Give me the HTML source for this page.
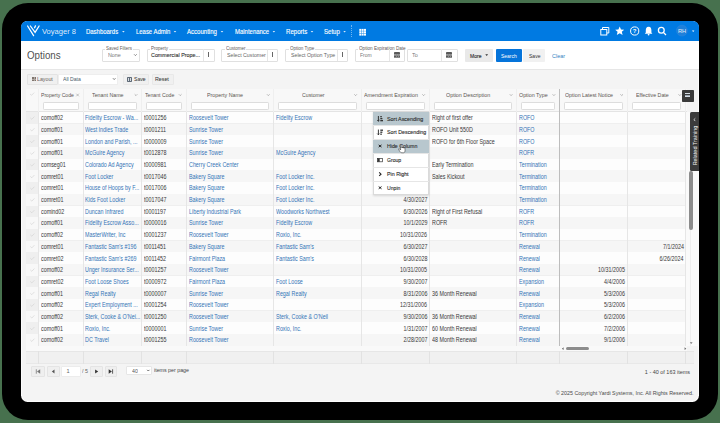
<!DOCTYPE html>
<html><head><meta charset="utf-8"><style>
html,body{margin:0;padding:0;}
body{width:720px;height:423px;position:relative;overflow:hidden;background:#47714e;font-family:"Liberation Sans", sans-serif;}
.a{position:absolute;}
.t{white-space:nowrap;}
</style></head><body>
<div class="a" style="left:2.1px;top:2.5px;width:715.6px;height:417.1px;background:#000;border-radius:26px;"></div>
<div class="a" style="left:20.9px;top:20.8px;width:677.8px;height:380.8px;background:#fcfcfc;border-radius:6.5px;"></div>
<div class="a" style="left:21.7px;top:21px;width:676.4px;height:379.9px;background:#f4f4f4;border-radius:6px;"></div>
<div class="a" style="left:21px;top:21px;width:677.7px;height:20.45px;background:#007ae2;border-radius:6px 6px 0 0;"></div>
<svg class="a" style="left:0;top:0" width="720" height="60"><g stroke="#fff" stroke-width="1.25" fill="none" stroke-linecap="round"><path d="M27.6 26 L33.6 35.6"/><path d="M30.4 26 L35.1 32.4 L39.1 26"/><path d="M35.5 25.8 L34.6 27.8"/></g></svg>
<div class="a t" style="top:26.82px;font-size:7.9px;line-height:9.48px;color:rgba(255,255,255,0.88);left:42px;transform:scaleX(0.956);transform-origin:0 0;">Voyager 8</div>
<div class="a t" style="top:28.34px;font-size:6.4px;line-height:7.68px;color:#fff;left:85.7px;transform:scaleX(0.933);transform-origin:0 0;-webkit-text-stroke:0.12px #fff;">Dashboards</div>
<svg class="a" style="left:0;top:0" width="720" height="50"><path d="M122.10000000000001 31.1 L124.7 31.1 L123.4 32.6 Z" fill="rgba(255,255,255,0.85)"/></svg>
<div class="a t" style="top:28.34px;font-size:6.4px;line-height:7.68px;color:#fff;left:135.7px;transform:scaleX(0.927);transform-origin:0 0;-webkit-text-stroke:0.12px #fff;">Lease Admin</div>
<svg class="a" style="left:0;top:0" width="720" height="50"><path d="M173.7 31.1 L176.3 31.1 L175 32.6 Z" fill="rgba(255,255,255,0.85)"/></svg>
<div class="a t" style="top:28.34px;font-size:6.4px;line-height:7.68px;color:#fff;left:187px;transform:scaleX(0.947);transform-origin:0 0;-webkit-text-stroke:0.12px #fff;">Accounting</div>
<svg class="a" style="left:0;top:0" width="720" height="50"><path d="M220.7 31.1 L223.3 31.1 L222 32.6 Z" fill="rgba(255,255,255,0.85)"/></svg>
<div class="a t" style="top:28.34px;font-size:6.4px;line-height:7.68px;color:#fff;left:234.6px;transform:scaleX(0.933);transform-origin:0 0;-webkit-text-stroke:0.12px #fff;">Maintenance</div>
<svg class="a" style="left:0;top:0" width="720" height="50"><path d="M272.59999999999997 31.1 L275.2 31.1 L273.9 32.6 Z" fill="rgba(255,255,255,0.85)"/></svg>
<div class="a t" style="top:28.34px;font-size:6.4px;line-height:7.68px;color:#fff;left:285.7px;transform:scaleX(0.950);transform-origin:0 0;-webkit-text-stroke:0.12px #fff;">Reports</div>
<svg class="a" style="left:0;top:0" width="720" height="50"><path d="M310.7 31.1 L313.3 31.1 L312 32.6 Z" fill="rgba(255,255,255,0.85)"/></svg>
<div class="a t" style="top:28.34px;font-size:6.4px;line-height:7.68px;color:#fff;left:324px;transform:scaleX(0.951);transform-origin:0 0;-webkit-text-stroke:0.12px #fff;">Setup</div>
<svg class="a" style="left:0;top:0" width="720" height="50"><path d="M343.3 31.1 L345.90000000000003 31.1 L344.6 32.6 Z" fill="rgba(255,255,255,0.85)"/></svg>
<div class="a" style="left:351px;top:25px;width:0.7px;height:12px;border-left:0.7px dotted rgba(255,255,255,0.45);"></div>
<svg class="a" style="left:0;top:0" width="720" height="60"><rect x="359.3" y="28.9" width="2.0" height="2.0" fill="#fff"/><rect x="359.3" y="31.25" width="2.0" height="2.0" fill="#fff"/><rect x="359.3" y="33.6" width="2.0" height="2.0" fill="#fff"/><rect x="361.65000000000003" y="28.9" width="2.0" height="2.0" fill="#fff"/><rect x="361.65000000000003" y="31.25" width="2.0" height="2.0" fill="#fff"/><rect x="361.65000000000003" y="33.6" width="2.0" height="2.0" fill="#fff"/><rect x="364.0" y="28.9" width="2.0" height="2.0" fill="#fff"/><rect x="364.0" y="31.25" width="2.0" height="2.0" fill="#fff"/><rect x="364.0" y="33.6" width="2.0" height="2.0" fill="#fff"/></svg>
<svg class="a" style="left:0;top:0" width="720" height="60"><g fill="none" stroke="#fff" stroke-width="1"><rect x="600.8" y="29.5" width="6" height="5.5"/><path d="M602.5 29.5 V27.5 H608.8 V33 H606.8"/><circle cx="634.7" cy="31" r="4.1"/></g><path fill="#fff" d="M619.7 26.6 L621 29.5 L624.2 29.7 L621.8 31.8 L622.6 35 L619.7 33.3 L616.8 35 L617.6 31.8 L615.2 29.7 L618.4 29.5 Z"/><text x="634.7" y="33.3" font-size="6" font-weight="700" fill="#fff" text-anchor="middle" font-family="Liberation Sans">?</text><path fill="#fff" d="M648.6 26.8 C646.2 26.8 645.8 29 645.8 30.5 V32.6 L644.8 33.8 H652.4 L651.4 32.6 V30.5 C651.4 29 651 26.8 648.6 26.8 Z"/><circle cx="648.6" cy="34.6" r="0.9" fill="#fff"/><g fill="none" stroke="#fff" stroke-width="1.3"><circle cx="661.3" cy="30.3" r="2.9"/><path d="M663.4 32.4 L666 35"/></g><circle cx="681.9" cy="30.6" r="5.5" fill="#1f80da" stroke="#2f8ae0" stroke-width="0.4"/><text x="682" y="32.9" font-size="5.6" fill="#e6eef8" text-anchor="middle" font-family="Liberation Sans" textLength="8.2" lengthAdjust="spacingAndGlyphs">RH</text><path d="M692 30.6 L694.4 30.6 L693.2 32.0 Z" fill="#fff"/></svg>
<div class="a" style="left:21px;top:41.45px;width:677.7px;height:27.35px;background:#fff;"></div>
<div class="a" style="left:21px;top:68.6px;width:677.7px;height:0.6px;background:#e6e6e6;"></div>
<div class="a t" style="top:49.38px;font-size:10.8px;line-height:12.96px;color:#505050;left:27.4px;transform:scaleX(0.903);transform-origin:0 0;">Options</div>
<div class="a" style="left:101.7px;top:48.9px;width:38px;height:12.7px;background:#fff;border:0.6px solid #e0e0e0;box-sizing:border-box;border-radius:1px;"></div>
<div class="a" style="left:104.8px;top:46px;width:27.89999999999999px;height:3.5px;background:#fff;"></div>
<div class="a t" style="top:45.17px;font-size:5.0px;line-height:6.00px;color:#5f5a56;left:105.8px;transform:scaleX(0.888);transform-origin:0 0;">Saved Filters</div>
<div class="a t" style="top:51.23px;font-size:6.1px;line-height:7.32px;color:#777;left:107.5px;transform:scaleX(0.878);transform-origin:0 0;">None</div>
<svg class="a" style="left:0;top:0" width="720" height="70"><path d="M134.1 54.3 L135.39999999999998 55.6 L136.7 54.3" stroke="#555" stroke-width="0.7" fill="none"/></svg>
<div class="a" style="left:146.8px;top:48.9px;width:68.2px;height:12.7px;background:#fff;border:0.6px solid #e0e0e0;box-sizing:border-box;border-radius:1px;"></div>
<div class="a" style="left:149.9px;top:46px;width:19.0px;height:3.5px;background:#fff;"></div>
<div class="a t" style="top:45.17px;font-size:5.0px;line-height:6.00px;color:#5f5a56;left:150.9px;transform:scaleX(0.900);transform-origin:0 0;">Property</div>
<div class="a t" style="top:51.23px;font-size:6.1px;line-height:7.32px;color:#333;left:151.3px;transform:scaleX(0.881);transform-origin:0 0;-webkit-text-stroke:0.12px #333;">Commercial Prope...</div>
<div class="a" style="left:203.3px;top:48.9px;width:0.6px;height:12px;background:#e6e6e6;"></div>
<div class="a" style="left:208.15px;top:52.3px;width:0.8px;height:1.25px;background:#666;"></div>
<div class="a" style="left:208.15px;top:54.25px;width:0.8px;height:1.25px;background:#666;"></div>
<div class="a" style="left:208.15px;top:56.199999999999996px;width:0.8px;height:1.25px;background:#666;"></div>
<div class="a" style="left:221.3px;top:48.9px;width:57px;height:12.7px;background:#fff;border:0.6px solid #e0e0e0;box-sizing:border-box;border-radius:1px;"></div>
<div class="a" style="left:224.6px;top:46px;width:21.5px;height:3.5px;background:#fff;"></div>
<div class="a t" style="top:45.17px;font-size:5.0px;line-height:6.00px;color:#5f5a56;left:225.6px;transform:scaleX(0.900);transform-origin:0 0;">Customer</div>
<div class="a t" style="top:51.23px;font-size:6.1px;line-height:7.32px;color:#666;left:226.6px;transform:scaleX(0.863);transform-origin:0 0;">Select Customer</div>
<div class="a" style="left:267.4px;top:48.9px;width:0.6px;height:12px;background:#e6e6e6;"></div>
<div class="a" style="left:272.25px;top:52.3px;width:0.8px;height:1.25px;background:#666;"></div>
<div class="a" style="left:272.25px;top:54.25px;width:0.8px;height:1.25px;background:#666;"></div>
<div class="a" style="left:272.25px;top:56.199999999999996px;width:0.8px;height:1.25px;background:#666;"></div>
<div class="a" style="left:285.3px;top:48.9px;width:63.2px;height:12.7px;background:#fff;border:0.6px solid #e0e0e0;box-sizing:border-box;border-radius:1px;"></div>
<div class="a" style="left:288.6px;top:46px;width:26.299999999999955px;height:3.5px;background:#fff;"></div>
<div class="a t" style="top:45.17px;font-size:5.0px;line-height:6.00px;color:#5f5a56;left:289.6px;transform:scaleX(0.904);transform-origin:0 0;">Option Type</div>
<div class="a t" style="top:51.23px;font-size:6.1px;line-height:7.32px;color:#666;left:290.6px;transform:scaleX(0.861);transform-origin:0 0;">Select Option Type</div>
<div class="a" style="left:336.9px;top:48.9px;width:0.6px;height:12px;background:#e6e6e6;"></div>
<div class="a" style="left:341.75px;top:52.3px;width:0.8px;height:1.25px;background:#666;"></div>
<div class="a" style="left:341.75px;top:54.25px;width:0.8px;height:1.25px;background:#666;"></div>
<div class="a" style="left:341.75px;top:56.199999999999996px;width:0.8px;height:1.25px;background:#666;"></div>
<div class="a" style="left:355.3px;top:48.9px;width:50.0px;height:12.7px;background:#fff;border:0.6px solid #e0e0e0;box-sizing:border-box;border-radius:1px;"></div>
<div class="a" style="left:358px;top:46px;width:48.69999999999999px;height:3.5px;background:#fff;"></div>
<div class="a t" style="top:45.17px;font-size:5.0px;line-height:6.00px;color:#5f5a56;left:359px;transform:scaleX(0.928);transform-origin:0 0;">Option Expiration Date</div>
<div class="a t" style="top:51.23px;font-size:6.1px;line-height:7.32px;color:#777;left:360.2px;transform:scaleX(0.822);transform-origin:0 0;">From</div>
<div class="a" style="left:389.4px;top:48.9px;width:0.6px;height:12px;background:#e6e6e6;"></div>
<div class="a" style="left:394.2px;top:52.0px;width:5.9px;height:6.0px;background:#5a5a5a;border-radius:0.4px;"></div>
<div class="a" style="left:394.2px;top:53.5px;width:5.9px;height:0.4px;background:#9a9a9a;"></div>
<div class="a" style="left:394.2px;top:55.2px;width:5.9px;height:0.4px;background:#8a8a8a;"></div>
<div class="a" style="left:394.2px;top:56.6px;width:5.9px;height:0.4px;background:#8a8a8a;"></div>
<div class="a" style="left:396.09999999999997px;top:53.5px;width:0.4px;height:4.5px;background:#8a8a8a;"></div>
<div class="a" style="left:397.9px;top:53.5px;width:0.4px;height:4.5px;background:#8a8a8a;"></div>
<div class="a" style="left:407.4px;top:48.9px;width:50.3px;height:12.7px;background:#fff;border:0.6px solid #e0e0e0;box-sizing:border-box;border-radius:1px;"></div>
<div class="a t" style="top:51.23px;font-size:6.1px;line-height:7.32px;color:#777;left:412.3px;transform:scaleX(0.900);transform-origin:0 0;">To</div>
<div class="a" style="left:441.25px;top:48.9px;width:0.6px;height:12px;background:#e6e6e6;"></div>
<div class="a" style="left:446.05px;top:52.0px;width:5.9px;height:6.0px;background:#5a5a5a;border-radius:0.4px;"></div>
<div class="a" style="left:446.05px;top:53.5px;width:5.9px;height:0.4px;background:#9a9a9a;"></div>
<div class="a" style="left:446.05px;top:55.2px;width:5.9px;height:0.4px;background:#8a8a8a;"></div>
<div class="a" style="left:446.05px;top:56.6px;width:5.9px;height:0.4px;background:#8a8a8a;"></div>
<div class="a" style="left:447.95px;top:53.5px;width:0.4px;height:4.5px;background:#8a8a8a;"></div>
<div class="a" style="left:449.75px;top:53.5px;width:0.4px;height:4.5px;background:#8a8a8a;"></div>
<div class="a" style="left:465px;top:49px;width:27.8px;height:12.6px;background:#e9e9e9;border-radius:1px;"></div>
<div class="a t" style="top:51.83px;font-size:6.1px;line-height:7.32px;color:#333;left:469.9px;transform:scaleX(0.827);transform-origin:0 0;-webkit-text-stroke:0.15px #333;">More</div>
<svg class="a" style="left:0;top:0" width="720" height="70"><path d="M485.3 54.3 L488.1 54.3 L486.7 55.9 Z" fill="#333"/></svg>
<div class="a" style="left:495.6px;top:49px;width:26.3px;height:12.6px;background:#0574da;border-radius:1px;"></div>
<div class="a t" style="top:51.83px;font-size:6.1px;line-height:7.32px;color:#fff;left:501px;transform:scaleX(0.817);transform-origin:0 0;">Search</div>
<div class="a" style="left:523.4px;top:49px;width:21.9px;height:12.6px;background:#f1f1f1;border-radius:1px;"></div>
<div class="a t" style="top:51.83px;font-size:6.1px;line-height:7.32px;color:#333;left:528.75px;transform:scaleX(0.824);transform-origin:0 0;">Save</div>
<div class="a t" style="top:51.83px;font-size:6.1px;line-height:7.32px;color:#2f7fbf;left:551.7px;transform:scaleX(0.892);transform-origin:0 0;">Clear</div>
<div class="a" style="left:27.3px;top:73.5px;width:30.45px;height:11.5px;background:#f0f0f0;border:0.6px solid #e3e3e3;box-sizing:border-box;border-radius:1px;"></div>
<div class="a" style="left:31.9px;top:77.1px;width:3.9px;height:3.7px;background:#7f756e;"></div>
<div class="a" style="left:33.7px;top:77.1px;width:0.25px;height:3.7px;background:#b0a8a2;"></div>
<div class="a" style="left:31.9px;top:78.9px;width:3.9px;height:0.25px;background:#b0a8a2;"></div>
<div class="a t" style="top:75.61px;font-size:5.8px;line-height:6.96px;color:#6a625c;left:36.9px;transform:scaleX(0.910);transform-origin:0 0;">Layout</div>
<div class="a" style="left:57.6px;top:73.5px;width:60.2px;height:11.5px;background:#fff;border:0.4px solid #eeeeee;box-sizing:border-box;"></div>
<div class="a t" style="top:75.61px;font-size:5.8px;line-height:6.96px;color:#4a5a6a;left:63.2px;transform:scaleX(0.881);transform-origin:0 0;">All Data</div>
<svg class="a" style="left:0;top:0" width="720" height="100"><path d="M113.0 78.3 L114.2 79.5 L115.4 78.3" stroke="#333" stroke-width="0.7" fill="none"/></svg>
<div class="a" style="left:123.1px;top:73.7px;width:25.6px;height:11.6px;background:#f0f0f0;border:0.4px solid #e8e8e8;box-sizing:border-box;border-radius:1px;"></div>
<div class="a" style="left:127.0px;top:76.8px;width:4.8px;height:4.8px;background:#5f6b78;border-radius:0.7px;"></div>
<div class="a" style="left:128.0px;top:77.5px;width:0.9px;height:3.4px;background:#d8dde3;"></div>
<div class="a" style="left:129.9px;top:77.5px;width:0.9px;height:3.4px;background:#d8dde3;"></div>
<div class="a t" style="top:75.52px;font-size:6.0px;line-height:7.20px;color:#3a3a3a;left:133.8px;transform:scaleX(0.848);transform-origin:0 0;-webkit-text-stroke:0.05px #333;">Save</div>
<div class="a" style="left:152px;top:73.7px;width:21.6px;height:11.6px;background:#f0f0f0;border:0.4px solid #e8e8e8;box-sizing:border-box;border-radius:1px;"></div>
<div class="a t" style="top:75.52px;font-size:6.0px;line-height:7.20px;color:#3a3a3a;left:155.3px;transform:scaleX(0.880);transform-origin:0 0;-webkit-text-stroke:0.05px #333;">Reset</div>
<div class="a" style="left:26px;top:89.3px;width:661px;height:22.700000000000003px;background:#f8f8f8;"></div>
<div class="a" style="left:26px;top:111.1px;width:661px;height:0.9px;background:#e4e4e4;"></div>
<div class="a" style="left:26px;top:112.0px;width:661px;height:11.69px;background:#fdfdfd;"></div>
<div class="a" style="left:26px;top:123.44px;width:661px;height:0.5px;background:#efefef;"></div>
<div class="a" style="left:26px;top:112.0px;width:12.6px;height:11.69px;background:#efefef;"></div>
<svg class="a" style="left:0;top:0" width="720" height="423"><path d="M30.3 117.90 L31.8 119.30 L34.4 116.60" stroke="#cfcfcf" stroke-width="0.6" fill="none"/></svg>
<div class="a t" style="top:114.24px;font-size:6.4px;line-height:7.68px;color:#383838;left:40.599999999999994px;transform:scaleX(0.840);transform-origin:0 0;">comoff02</div>
<div class="a t" style="top:114.24px;font-size:6.4px;line-height:7.68px;color:#3474b6;left:85.4px;transform:scaleX(0.840);transform-origin:0 0;">Fidelity Escrow - Wa...</div>
<div class="a t" style="top:114.24px;font-size:6.4px;line-height:7.68px;color:#383838;left:143.7px;transform:scaleX(0.840);transform-origin:0 0;">t0001256</div>
<div class="a t" style="top:114.24px;font-size:6.4px;line-height:7.68px;color:#3474b6;left:188.5px;transform:scaleX(0.840);transform-origin:0 0;">Roosevelt Tower</div>
<div class="a t" style="top:114.24px;font-size:6.4px;line-height:7.68px;color:#3474b6;left:275.9px;transform:scaleX(0.840);transform-origin:0 0;">Fidelity Escrow</div>
<div class="a t" style="top:114.24px;font-size:6.4px;line-height:7.68px;color:#383838;right:292.6px;text-align:right;transform:scaleX(0.840);transform-origin:100% 0;"></div>
<div class="a t" style="top:114.24px;font-size:6.4px;line-height:7.68px;color:#383838;left:431.8px;transform:scaleX(0.840);transform-origin:0 0;">Right of first offer</div>
<div class="a t" style="top:114.24px;font-size:6.4px;line-height:7.68px;color:#3474b6;left:518.8000000000001px;transform:scaleX(0.840);transform-origin:0 0;">ROFO</div>
<div class="a t" style="top:114.24px;font-size:6.4px;line-height:7.68px;color:#383838;right:94.70000000000005px;text-align:right;transform:scaleX(0.840);transform-origin:100% 0;"></div>
<div class="a t" style="top:114.24px;font-size:6.4px;line-height:7.68px;color:#383838;right:36.10000000000002px;text-align:right;transform:scaleX(0.840);transform-origin:100% 0;"></div>
<div class="a" style="left:26px;top:123.69px;width:661px;height:11.69px;background:#f6f6f6;"></div>
<div class="a" style="left:26px;top:135.13px;width:661px;height:0.5px;background:#efefef;"></div>
<div class="a" style="left:26px;top:123.69px;width:12.6px;height:11.69px;background:#f8f8f8;"></div>
<svg class="a" style="left:0;top:0" width="720" height="423"><path d="M30.3 129.59 L31.8 130.99 L34.4 128.29" stroke="#cfcfcf" stroke-width="0.6" fill="none"/></svg>
<div class="a t" style="top:125.93px;font-size:6.4px;line-height:7.68px;color:#383838;left:40.599999999999994px;transform:scaleX(0.840);transform-origin:0 0;">comoff01</div>
<div class="a t" style="top:125.93px;font-size:6.4px;line-height:7.68px;color:#3474b6;left:85.4px;transform:scaleX(0.840);transform-origin:0 0;">West Indies Trade</div>
<div class="a t" style="top:125.93px;font-size:6.4px;line-height:7.68px;color:#383838;left:143.7px;transform:scaleX(0.840);transform-origin:0 0;">t0001211</div>
<div class="a t" style="top:125.93px;font-size:6.4px;line-height:7.68px;color:#3474b6;left:188.5px;transform:scaleX(0.840);transform-origin:0 0;">Sunrise Tower</div>
<div class="a t" style="top:125.93px;font-size:6.4px;line-height:7.68px;color:#3474b6;left:275.9px;transform:scaleX(0.840);transform-origin:0 0;"></div>
<div class="a t" style="top:125.93px;font-size:6.4px;line-height:7.68px;color:#383838;right:292.6px;text-align:right;transform:scaleX(0.840);transform-origin:100% 0;"></div>
<div class="a t" style="top:125.93px;font-size:6.4px;line-height:7.68px;color:#383838;left:431.8px;transform:scaleX(0.840);transform-origin:0 0;">ROFO Unit 550D</div>
<div class="a t" style="top:125.93px;font-size:6.4px;line-height:7.68px;color:#3474b6;left:518.8000000000001px;transform:scaleX(0.840);transform-origin:0 0;">ROFO</div>
<div class="a t" style="top:125.93px;font-size:6.4px;line-height:7.68px;color:#383838;right:94.70000000000005px;text-align:right;transform:scaleX(0.840);transform-origin:100% 0;"></div>
<div class="a t" style="top:125.93px;font-size:6.4px;line-height:7.68px;color:#383838;right:36.10000000000002px;text-align:right;transform:scaleX(0.840);transform-origin:100% 0;"></div>
<div class="a" style="left:26px;top:135.38px;width:661px;height:11.69px;background:#fdfdfd;"></div>
<div class="a" style="left:26px;top:146.82px;width:661px;height:0.5px;background:#efefef;"></div>
<div class="a" style="left:26px;top:135.38px;width:12.6px;height:11.69px;background:#efefef;"></div>
<svg class="a" style="left:0;top:0" width="720" height="423"><path d="M30.3 141.28 L31.8 142.68 L34.4 139.98" stroke="#cfcfcf" stroke-width="0.6" fill="none"/></svg>
<div class="a t" style="top:137.62px;font-size:6.4px;line-height:7.68px;color:#383838;left:40.599999999999994px;transform:scaleX(0.840);transform-origin:0 0;">comoff01</div>
<div class="a t" style="top:137.62px;font-size:6.4px;line-height:7.68px;color:#3474b6;left:85.4px;transform:scaleX(0.840);transform-origin:0 0;">London and Parish, ...</div>
<div class="a t" style="top:137.62px;font-size:6.4px;line-height:7.68px;color:#383838;left:143.7px;transform:scaleX(0.840);transform-origin:0 0;">t0000009</div>
<div class="a t" style="top:137.62px;font-size:6.4px;line-height:7.68px;color:#3474b6;left:188.5px;transform:scaleX(0.840);transform-origin:0 0;">Sunrise Tower</div>
<div class="a t" style="top:137.62px;font-size:6.4px;line-height:7.68px;color:#3474b6;left:275.9px;transform:scaleX(0.840);transform-origin:0 0;"></div>
<div class="a t" style="top:137.62px;font-size:6.4px;line-height:7.68px;color:#383838;right:292.6px;text-align:right;transform:scaleX(0.840);transform-origin:100% 0;"></div>
<div class="a t" style="top:137.62px;font-size:6.4px;line-height:7.68px;color:#383838;left:431.8px;transform:scaleX(0.840);transform-origin:0 0;">ROFO for 6th Floor Space</div>
<div class="a t" style="top:137.62px;font-size:6.4px;line-height:7.68px;color:#3474b6;left:518.8000000000001px;transform:scaleX(0.840);transform-origin:0 0;">ROFO</div>
<div class="a t" style="top:137.62px;font-size:6.4px;line-height:7.68px;color:#383838;right:94.70000000000005px;text-align:right;transform:scaleX(0.840);transform-origin:100% 0;"></div>
<div class="a t" style="top:137.62px;font-size:6.4px;line-height:7.68px;color:#383838;right:36.10000000000002px;text-align:right;transform:scaleX(0.840);transform-origin:100% 0;"></div>
<div class="a" style="left:26px;top:147.07px;width:661px;height:11.69px;background:#f6f6f6;"></div>
<div class="a" style="left:26px;top:158.51px;width:661px;height:0.5px;background:#efefef;"></div>
<div class="a" style="left:26px;top:147.07px;width:12.6px;height:11.69px;background:#f8f8f8;"></div>
<svg class="a" style="left:0;top:0" width="720" height="423"><path d="M30.3 152.97 L31.8 154.37 L34.4 151.67" stroke="#cfcfcf" stroke-width="0.6" fill="none"/></svg>
<div class="a t" style="top:149.31px;font-size:6.4px;line-height:7.68px;color:#383838;left:40.599999999999994px;transform:scaleX(0.840);transform-origin:0 0;">comoff01</div>
<div class="a t" style="top:149.31px;font-size:6.4px;line-height:7.68px;color:#3474b6;left:85.4px;transform:scaleX(0.840);transform-origin:0 0;">McGuire Agency</div>
<div class="a t" style="top:149.31px;font-size:6.4px;line-height:7.68px;color:#383838;left:143.7px;transform:scaleX(0.840);transform-origin:0 0;">t0012878</div>
<div class="a t" style="top:149.31px;font-size:6.4px;line-height:7.68px;color:#3474b6;left:188.5px;transform:scaleX(0.840);transform-origin:0 0;">Sunrise Tower</div>
<div class="a t" style="top:149.31px;font-size:6.4px;line-height:7.68px;color:#3474b6;left:275.9px;transform:scaleX(0.840);transform-origin:0 0;">McGuire Agency</div>
<div class="a t" style="top:149.31px;font-size:6.4px;line-height:7.68px;color:#383838;right:292.6px;text-align:right;transform:scaleX(0.840);transform-origin:100% 0;"></div>
<div class="a t" style="top:149.31px;font-size:6.4px;line-height:7.68px;color:#383838;left:431.8px;transform:scaleX(0.840);transform-origin:0 0;"></div>
<div class="a t" style="top:149.31px;font-size:6.4px;line-height:7.68px;color:#3474b6;left:518.8000000000001px;transform:scaleX(0.840);transform-origin:0 0;">ROFR</div>
<div class="a t" style="top:149.31px;font-size:6.4px;line-height:7.68px;color:#383838;right:94.70000000000005px;text-align:right;transform:scaleX(0.840);transform-origin:100% 0;"></div>
<div class="a t" style="top:149.31px;font-size:6.4px;line-height:7.68px;color:#383838;right:36.10000000000002px;text-align:right;transform:scaleX(0.840);transform-origin:100% 0;"></div>
<div class="a" style="left:26px;top:158.76px;width:661px;height:11.69px;background:#fdfdfd;"></div>
<div class="a" style="left:26px;top:170.2px;width:661px;height:0.5px;background:#efefef;"></div>
<div class="a" style="left:26px;top:158.76px;width:12.6px;height:11.69px;background:#efefef;"></div>
<svg class="a" style="left:0;top:0" width="720" height="423"><path d="M30.3 164.66 L31.8 166.06 L34.4 163.36" stroke="#cfcfcf" stroke-width="0.6" fill="none"/></svg>
<div class="a t" style="top:161.00px;font-size:6.4px;line-height:7.68px;color:#383838;left:40.599999999999994px;transform:scaleX(0.840);transform-origin:0 0;">comseg01</div>
<div class="a t" style="top:161.00px;font-size:6.4px;line-height:7.68px;color:#3474b6;left:85.4px;transform:scaleX(0.840);transform-origin:0 0;">Colorado Ad Agency</div>
<div class="a t" style="top:161.00px;font-size:6.4px;line-height:7.68px;color:#383838;left:143.7px;transform:scaleX(0.840);transform-origin:0 0;">t0000981</div>
<div class="a t" style="top:161.00px;font-size:6.4px;line-height:7.68px;color:#3474b6;left:188.5px;transform:scaleX(0.840);transform-origin:0 0;">Cherry Creek Center</div>
<div class="a t" style="top:161.00px;font-size:6.4px;line-height:7.68px;color:#3474b6;left:275.9px;transform:scaleX(0.840);transform-origin:0 0;"></div>
<div class="a t" style="top:161.00px;font-size:6.4px;line-height:7.68px;color:#383838;right:292.6px;text-align:right;transform:scaleX(0.840);transform-origin:100% 0;"></div>
<div class="a t" style="top:161.00px;font-size:6.4px;line-height:7.68px;color:#383838;left:431.8px;transform:scaleX(0.840);transform-origin:0 0;">Early Termination</div>
<div class="a t" style="top:161.00px;font-size:6.4px;line-height:7.68px;color:#3474b6;left:518.8000000000001px;transform:scaleX(0.840);transform-origin:0 0;">Termination</div>
<div class="a t" style="top:161.00px;font-size:6.4px;line-height:7.68px;color:#383838;right:94.70000000000005px;text-align:right;transform:scaleX(0.840);transform-origin:100% 0;"></div>
<div class="a t" style="top:161.00px;font-size:6.4px;line-height:7.68px;color:#383838;right:36.10000000000002px;text-align:right;transform:scaleX(0.840);transform-origin:100% 0;"></div>
<div class="a" style="left:26px;top:170.45px;width:661px;height:11.69px;background:#f6f6f6;"></div>
<div class="a" style="left:26px;top:181.89px;width:661px;height:0.5px;background:#efefef;"></div>
<div class="a" style="left:26px;top:170.45px;width:12.6px;height:11.69px;background:#f8f8f8;"></div>
<svg class="a" style="left:0;top:0" width="720" height="423"><path d="M30.3 176.35 L31.8 177.75 L34.4 175.05" stroke="#cfcfcf" stroke-width="0.6" fill="none"/></svg>
<div class="a t" style="top:172.69px;font-size:6.4px;line-height:7.68px;color:#383838;left:40.599999999999994px;transform:scaleX(0.840);transform-origin:0 0;">comret01</div>
<div class="a t" style="top:172.69px;font-size:6.4px;line-height:7.68px;color:#3474b6;left:85.4px;transform:scaleX(0.840);transform-origin:0 0;">Foot Locker</div>
<div class="a t" style="top:172.69px;font-size:6.4px;line-height:7.68px;color:#383838;left:143.7px;transform:scaleX(0.840);transform-origin:0 0;">t0017046</div>
<div class="a t" style="top:172.69px;font-size:6.4px;line-height:7.68px;color:#3474b6;left:188.5px;transform:scaleX(0.840);transform-origin:0 0;">Bakery Square</div>
<div class="a t" style="top:172.69px;font-size:6.4px;line-height:7.68px;color:#3474b6;left:275.9px;transform:scaleX(0.840);transform-origin:0 0;">Foot Locker Inc.</div>
<div class="a t" style="top:172.69px;font-size:6.4px;line-height:7.68px;color:#383838;right:292.6px;text-align:right;transform:scaleX(0.840);transform-origin:100% 0;"></div>
<div class="a t" style="top:172.69px;font-size:6.4px;line-height:7.68px;color:#383838;left:431.8px;transform:scaleX(0.840);transform-origin:0 0;">Sales Kickout</div>
<div class="a t" style="top:172.69px;font-size:6.4px;line-height:7.68px;color:#3474b6;left:518.8000000000001px;transform:scaleX(0.840);transform-origin:0 0;">Termination</div>
<div class="a t" style="top:172.69px;font-size:6.4px;line-height:7.68px;color:#383838;right:94.70000000000005px;text-align:right;transform:scaleX(0.840);transform-origin:100% 0;"></div>
<div class="a t" style="top:172.69px;font-size:6.4px;line-height:7.68px;color:#383838;right:36.10000000000002px;text-align:right;transform:scaleX(0.840);transform-origin:100% 0;"></div>
<div class="a" style="left:26px;top:182.14px;width:661px;height:11.69px;background:#fdfdfd;"></div>
<div class="a" style="left:26px;top:193.57999999999998px;width:661px;height:0.5px;background:#efefef;"></div>
<div class="a" style="left:26px;top:182.14px;width:12.6px;height:11.69px;background:#efefef;"></div>
<svg class="a" style="left:0;top:0" width="720" height="423"><path d="M30.3 188.04 L31.8 189.44 L34.4 186.74" stroke="#cfcfcf" stroke-width="0.6" fill="none"/></svg>
<div class="a t" style="top:184.38px;font-size:6.4px;line-height:7.68px;color:#383838;left:40.599999999999994px;transform:scaleX(0.840);transform-origin:0 0;">comret01</div>
<div class="a t" style="top:184.38px;font-size:6.4px;line-height:7.68px;color:#3474b6;left:85.4px;transform:scaleX(0.840);transform-origin:0 0;">House of Hoops by F...</div>
<div class="a t" style="top:184.38px;font-size:6.4px;line-height:7.68px;color:#383838;left:143.7px;transform:scaleX(0.840);transform-origin:0 0;">t0017006</div>
<div class="a t" style="top:184.38px;font-size:6.4px;line-height:7.68px;color:#3474b6;left:188.5px;transform:scaleX(0.840);transform-origin:0 0;">Bakery Square</div>
<div class="a t" style="top:184.38px;font-size:6.4px;line-height:7.68px;color:#3474b6;left:275.9px;transform:scaleX(0.840);transform-origin:0 0;">Foot Locker Inc.</div>
<div class="a t" style="top:184.38px;font-size:6.4px;line-height:7.68px;color:#383838;right:292.6px;text-align:right;transform:scaleX(0.840);transform-origin:100% 0;"></div>
<div class="a t" style="top:184.38px;font-size:6.4px;line-height:7.68px;color:#383838;left:431.8px;transform:scaleX(0.840);transform-origin:0 0;"></div>
<div class="a t" style="top:184.38px;font-size:6.4px;line-height:7.68px;color:#3474b6;left:518.8000000000001px;transform:scaleX(0.840);transform-origin:0 0;">Termination</div>
<div class="a t" style="top:184.38px;font-size:6.4px;line-height:7.68px;color:#383838;right:94.70000000000005px;text-align:right;transform:scaleX(0.840);transform-origin:100% 0;"></div>
<div class="a t" style="top:184.38px;font-size:6.4px;line-height:7.68px;color:#383838;right:36.10000000000002px;text-align:right;transform:scaleX(0.840);transform-origin:100% 0;"></div>
<div class="a" style="left:26px;top:193.82999999999998px;width:661px;height:11.69px;background:#f6f6f6;"></div>
<div class="a" style="left:26px;top:205.26999999999998px;width:661px;height:0.5px;background:#efefef;"></div>
<div class="a" style="left:26px;top:193.82999999999998px;width:12.6px;height:11.69px;background:#f8f8f8;"></div>
<svg class="a" style="left:0;top:0" width="720" height="423"><path d="M30.3 199.73 L31.8 201.13 L34.4 198.43" stroke="#cfcfcf" stroke-width="0.6" fill="none"/></svg>
<div class="a t" style="top:196.07px;font-size:6.4px;line-height:7.68px;color:#383838;left:40.599999999999994px;transform:scaleX(0.840);transform-origin:0 0;">comret01</div>
<div class="a t" style="top:196.07px;font-size:6.4px;line-height:7.68px;color:#3474b6;left:85.4px;transform:scaleX(0.840);transform-origin:0 0;">Kids Foot Locker</div>
<div class="a t" style="top:196.07px;font-size:6.4px;line-height:7.68px;color:#383838;left:143.7px;transform:scaleX(0.840);transform-origin:0 0;">t0017047</div>
<div class="a t" style="top:196.07px;font-size:6.4px;line-height:7.68px;color:#3474b6;left:188.5px;transform:scaleX(0.840);transform-origin:0 0;">Bakery Square</div>
<div class="a t" style="top:196.07px;font-size:6.4px;line-height:7.68px;color:#3474b6;left:275.9px;transform:scaleX(0.840);transform-origin:0 0;">Foot Locker Inc.</div>
<div class="a t" style="top:196.07px;font-size:6.4px;line-height:7.68px;color:#383838;right:292.6px;text-align:right;transform:scaleX(0.840);transform-origin:100% 0;">4/30/2027</div>
<div class="a t" style="top:196.07px;font-size:6.4px;line-height:7.68px;color:#383838;left:431.8px;transform:scaleX(0.840);transform-origin:0 0;"></div>
<div class="a t" style="top:196.07px;font-size:6.4px;line-height:7.68px;color:#3474b6;left:518.8000000000001px;transform:scaleX(0.840);transform-origin:0 0;">Termination</div>
<div class="a t" style="top:196.07px;font-size:6.4px;line-height:7.68px;color:#383838;right:94.70000000000005px;text-align:right;transform:scaleX(0.840);transform-origin:100% 0;"></div>
<div class="a t" style="top:196.07px;font-size:6.4px;line-height:7.68px;color:#383838;right:36.10000000000002px;text-align:right;transform:scaleX(0.840);transform-origin:100% 0;"></div>
<div class="a" style="left:26px;top:205.51999999999998px;width:661px;height:11.69px;background:#fdfdfd;"></div>
<div class="a" style="left:26px;top:216.95999999999998px;width:661px;height:0.5px;background:#efefef;"></div>
<div class="a" style="left:26px;top:205.51999999999998px;width:12.6px;height:11.69px;background:#efefef;"></div>
<svg class="a" style="left:0;top:0" width="720" height="423"><path d="M30.3 211.42 L31.8 212.82 L34.4 210.12" stroke="#cfcfcf" stroke-width="0.6" fill="none"/></svg>
<div class="a t" style="top:207.76px;font-size:6.4px;line-height:7.68px;color:#383838;left:40.599999999999994px;transform:scaleX(0.840);transform-origin:0 0;">comind02</div>
<div class="a t" style="top:207.76px;font-size:6.4px;line-height:7.68px;color:#3474b6;left:85.4px;transform:scaleX(0.840);transform-origin:0 0;">Duncan Infrared</div>
<div class="a t" style="top:207.76px;font-size:6.4px;line-height:7.68px;color:#383838;left:143.7px;transform:scaleX(0.840);transform-origin:0 0;">t0001197</div>
<div class="a t" style="top:207.76px;font-size:6.4px;line-height:7.68px;color:#3474b6;left:188.5px;transform:scaleX(0.840);transform-origin:0 0;">Liberty Industrial Park</div>
<div class="a t" style="top:207.76px;font-size:6.4px;line-height:7.68px;color:#3474b6;left:275.9px;transform:scaleX(0.840);transform-origin:0 0;">Woodworks Northwest</div>
<div class="a t" style="top:207.76px;font-size:6.4px;line-height:7.68px;color:#383838;right:292.6px;text-align:right;transform:scaleX(0.840);transform-origin:100% 0;">6/30/2026</div>
<div class="a t" style="top:207.76px;font-size:6.4px;line-height:7.68px;color:#383838;left:431.8px;transform:scaleX(0.840);transform-origin:0 0;">Right of First Refusal</div>
<div class="a t" style="top:207.76px;font-size:6.4px;line-height:7.68px;color:#3474b6;left:518.8000000000001px;transform:scaleX(0.840);transform-origin:0 0;">ROFR</div>
<div class="a t" style="top:207.76px;font-size:6.4px;line-height:7.68px;color:#383838;right:94.70000000000005px;text-align:right;transform:scaleX(0.840);transform-origin:100% 0;"></div>
<div class="a t" style="top:207.76px;font-size:6.4px;line-height:7.68px;color:#383838;right:36.10000000000002px;text-align:right;transform:scaleX(0.840);transform-origin:100% 0;"></div>
<div class="a" style="left:26px;top:217.20999999999998px;width:661px;height:11.69px;background:#f6f6f6;"></div>
<div class="a" style="left:26px;top:228.64999999999998px;width:661px;height:0.5px;background:#efefef;"></div>
<div class="a" style="left:26px;top:217.20999999999998px;width:12.6px;height:11.69px;background:#f8f8f8;"></div>
<svg class="a" style="left:0;top:0" width="720" height="423"><path d="M30.3 223.11 L31.8 224.51 L34.4 221.81" stroke="#cfcfcf" stroke-width="0.6" fill="none"/></svg>
<div class="a t" style="top:219.45px;font-size:6.4px;line-height:7.68px;color:#383838;left:40.599999999999994px;transform:scaleX(0.840);transform-origin:0 0;">comoff01</div>
<div class="a t" style="top:219.45px;font-size:6.4px;line-height:7.68px;color:#3474b6;left:85.4px;transform:scaleX(0.840);transform-origin:0 0;">Fidelity Escrow Asso...</div>
<div class="a t" style="top:219.45px;font-size:6.4px;line-height:7.68px;color:#383838;left:143.7px;transform:scaleX(0.840);transform-origin:0 0;">t0000016</div>
<div class="a t" style="top:219.45px;font-size:6.4px;line-height:7.68px;color:#3474b6;left:188.5px;transform:scaleX(0.840);transform-origin:0 0;">Sunrise Tower</div>
<div class="a t" style="top:219.45px;font-size:6.4px;line-height:7.68px;color:#3474b6;left:275.9px;transform:scaleX(0.840);transform-origin:0 0;">Fidelity Escrow</div>
<div class="a t" style="top:219.45px;font-size:6.4px;line-height:7.68px;color:#383838;right:292.6px;text-align:right;transform:scaleX(0.840);transform-origin:100% 0;">10/1/2029</div>
<div class="a t" style="top:219.45px;font-size:6.4px;line-height:7.68px;color:#383838;left:431.8px;transform:scaleX(0.840);transform-origin:0 0;">ROFR</div>
<div class="a t" style="top:219.45px;font-size:6.4px;line-height:7.68px;color:#3474b6;left:518.8000000000001px;transform:scaleX(0.840);transform-origin:0 0;">ROFR</div>
<div class="a t" style="top:219.45px;font-size:6.4px;line-height:7.68px;color:#383838;right:94.70000000000005px;text-align:right;transform:scaleX(0.840);transform-origin:100% 0;"></div>
<div class="a t" style="top:219.45px;font-size:6.4px;line-height:7.68px;color:#383838;right:36.10000000000002px;text-align:right;transform:scaleX(0.840);transform-origin:100% 0;"></div>
<div class="a" style="left:26px;top:228.89999999999998px;width:661px;height:11.69px;background:#fdfdfd;"></div>
<div class="a" style="left:26px;top:240.33999999999997px;width:661px;height:0.5px;background:#efefef;"></div>
<div class="a" style="left:26px;top:228.89999999999998px;width:12.6px;height:11.69px;background:#efefef;"></div>
<svg class="a" style="left:0;top:0" width="720" height="423"><path d="M30.3 234.80 L31.8 236.20 L34.4 233.50" stroke="#cfcfcf" stroke-width="0.6" fill="none"/></svg>
<div class="a t" style="top:231.14px;font-size:6.4px;line-height:7.68px;color:#383838;left:40.599999999999994px;transform:scaleX(0.840);transform-origin:0 0;">comoff02</div>
<div class="a t" style="top:231.14px;font-size:6.4px;line-height:7.68px;color:#3474b6;left:85.4px;transform:scaleX(0.840);transform-origin:0 0;">MasterWriter, Inc</div>
<div class="a t" style="top:231.14px;font-size:6.4px;line-height:7.68px;color:#383838;left:143.7px;transform:scaleX(0.840);transform-origin:0 0;">t0001237</div>
<div class="a t" style="top:231.14px;font-size:6.4px;line-height:7.68px;color:#3474b6;left:188.5px;transform:scaleX(0.840);transform-origin:0 0;">Roosevelt Tower</div>
<div class="a t" style="top:231.14px;font-size:6.4px;line-height:7.68px;color:#3474b6;left:275.9px;transform:scaleX(0.840);transform-origin:0 0;">Roxio, Inc.</div>
<div class="a t" style="top:231.14px;font-size:6.4px;line-height:7.68px;color:#383838;right:292.6px;text-align:right;transform:scaleX(0.840);transform-origin:100% 0;">10/31/2026</div>
<div class="a t" style="top:231.14px;font-size:6.4px;line-height:7.68px;color:#383838;left:431.8px;transform:scaleX(0.840);transform-origin:0 0;"></div>
<div class="a t" style="top:231.14px;font-size:6.4px;line-height:7.68px;color:#3474b6;left:518.8000000000001px;transform:scaleX(0.840);transform-origin:0 0;">Termination</div>
<div class="a t" style="top:231.14px;font-size:6.4px;line-height:7.68px;color:#383838;right:94.70000000000005px;text-align:right;transform:scaleX(0.840);transform-origin:100% 0;"></div>
<div class="a t" style="top:231.14px;font-size:6.4px;line-height:7.68px;color:#383838;right:36.10000000000002px;text-align:right;transform:scaleX(0.840);transform-origin:100% 0;"></div>
<div class="a" style="left:26px;top:240.59px;width:661px;height:11.69px;background:#f6f6f6;"></div>
<div class="a" style="left:26px;top:252.03px;width:661px;height:0.5px;background:#efefef;"></div>
<div class="a" style="left:26px;top:240.59px;width:12.6px;height:11.69px;background:#f8f8f8;"></div>
<svg class="a" style="left:0;top:0" width="720" height="423"><path d="M30.3 246.49 L31.8 247.89 L34.4 245.19" stroke="#cfcfcf" stroke-width="0.6" fill="none"/></svg>
<div class="a t" style="top:242.83px;font-size:6.4px;line-height:7.68px;color:#383838;left:40.599999999999994px;transform:scaleX(0.840);transform-origin:0 0;">comret01</div>
<div class="a t" style="top:242.83px;font-size:6.4px;line-height:7.68px;color:#3474b6;left:85.4px;transform:scaleX(0.840);transform-origin:0 0;">Fantastic Sam's #196</div>
<div class="a t" style="top:242.83px;font-size:6.4px;line-height:7.68px;color:#383838;left:143.7px;transform:scaleX(0.840);transform-origin:0 0;">t0011451</div>
<div class="a t" style="top:242.83px;font-size:6.4px;line-height:7.68px;color:#3474b6;left:188.5px;transform:scaleX(0.840);transform-origin:0 0;">Bakery Square</div>
<div class="a t" style="top:242.83px;font-size:6.4px;line-height:7.68px;color:#3474b6;left:275.9px;transform:scaleX(0.840);transform-origin:0 0;">Fantastic Sam's</div>
<div class="a t" style="top:242.83px;font-size:6.4px;line-height:7.68px;color:#383838;right:292.6px;text-align:right;transform:scaleX(0.840);transform-origin:100% 0;">6/30/2027</div>
<div class="a t" style="top:242.83px;font-size:6.4px;line-height:7.68px;color:#383838;left:431.8px;transform:scaleX(0.840);transform-origin:0 0;"></div>
<div class="a t" style="top:242.83px;font-size:6.4px;line-height:7.68px;color:#3474b6;left:518.8000000000001px;transform:scaleX(0.840);transform-origin:0 0;">Renewal</div>
<div class="a t" style="top:242.83px;font-size:6.4px;line-height:7.68px;color:#383838;right:94.70000000000005px;text-align:right;transform:scaleX(0.840);transform-origin:100% 0;"></div>
<div class="a t" style="top:242.83px;font-size:6.4px;line-height:7.68px;color:#383838;right:36.10000000000002px;text-align:right;transform:scaleX(0.840);transform-origin:100% 0;">7/1/2024</div>
<div class="a" style="left:26px;top:252.28px;width:661px;height:11.69px;background:#fdfdfd;"></div>
<div class="a" style="left:26px;top:263.72px;width:661px;height:0.5px;background:#efefef;"></div>
<div class="a" style="left:26px;top:252.28px;width:12.6px;height:11.69px;background:#efefef;"></div>
<svg class="a" style="left:0;top:0" width="720" height="423"><path d="M30.3 258.18 L31.8 259.58 L34.4 256.88" stroke="#cfcfcf" stroke-width="0.6" fill="none"/></svg>
<div class="a t" style="top:254.52px;font-size:6.4px;line-height:7.68px;color:#383838;left:40.599999999999994px;transform:scaleX(0.840);transform-origin:0 0;">comret02</div>
<div class="a t" style="top:254.52px;font-size:6.4px;line-height:7.68px;color:#3474b6;left:85.4px;transform:scaleX(0.840);transform-origin:0 0;">Fantastic Sam's #269</div>
<div class="a t" style="top:254.52px;font-size:6.4px;line-height:7.68px;color:#383838;left:143.7px;transform:scaleX(0.840);transform-origin:0 0;">t0011452</div>
<div class="a t" style="top:254.52px;font-size:6.4px;line-height:7.68px;color:#3474b6;left:188.5px;transform:scaleX(0.840);transform-origin:0 0;">Fairmont Plaza</div>
<div class="a t" style="top:254.52px;font-size:6.4px;line-height:7.68px;color:#3474b6;left:275.9px;transform:scaleX(0.840);transform-origin:0 0;">Fantastic Sam's</div>
<div class="a t" style="top:254.52px;font-size:6.4px;line-height:7.68px;color:#383838;right:292.6px;text-align:right;transform:scaleX(0.840);transform-origin:100% 0;">6/30/2028</div>
<div class="a t" style="top:254.52px;font-size:6.4px;line-height:7.68px;color:#383838;left:431.8px;transform:scaleX(0.840);transform-origin:0 0;"></div>
<div class="a t" style="top:254.52px;font-size:6.4px;line-height:7.68px;color:#3474b6;left:518.8000000000001px;transform:scaleX(0.840);transform-origin:0 0;">Renewal</div>
<div class="a t" style="top:254.52px;font-size:6.4px;line-height:7.68px;color:#383838;right:94.70000000000005px;text-align:right;transform:scaleX(0.840);transform-origin:100% 0;"></div>
<div class="a t" style="top:254.52px;font-size:6.4px;line-height:7.68px;color:#383838;right:36.10000000000002px;text-align:right;transform:scaleX(0.840);transform-origin:100% 0;">6/26/2024</div>
<div class="a" style="left:26px;top:263.97px;width:661px;height:11.69px;background:#f6f6f6;"></div>
<div class="a" style="left:26px;top:275.41px;width:661px;height:0.5px;background:#efefef;"></div>
<div class="a" style="left:26px;top:263.97px;width:12.6px;height:11.69px;background:#f8f8f8;"></div>
<svg class="a" style="left:0;top:0" width="720" height="423"><path d="M30.3 269.87 L31.8 271.27 L34.4 268.57" stroke="#cfcfcf" stroke-width="0.6" fill="none"/></svg>
<div class="a t" style="top:266.21px;font-size:6.4px;line-height:7.68px;color:#383838;left:40.599999999999994px;transform:scaleX(0.840);transform-origin:0 0;">comoff02</div>
<div class="a t" style="top:266.21px;font-size:6.4px;line-height:7.68px;color:#3474b6;left:85.4px;transform:scaleX(0.840);transform-origin:0 0;">Unger Insurance Ser...</div>
<div class="a t" style="top:266.21px;font-size:6.4px;line-height:7.68px;color:#383838;left:143.7px;transform:scaleX(0.840);transform-origin:0 0;">t0001257</div>
<div class="a t" style="top:266.21px;font-size:6.4px;line-height:7.68px;color:#3474b6;left:188.5px;transform:scaleX(0.840);transform-origin:0 0;">Roosevelt Tower</div>
<div class="a t" style="top:266.21px;font-size:6.4px;line-height:7.68px;color:#3474b6;left:275.9px;transform:scaleX(0.840);transform-origin:0 0;"></div>
<div class="a t" style="top:266.21px;font-size:6.4px;line-height:7.68px;color:#383838;right:292.6px;text-align:right;transform:scaleX(0.840);transform-origin:100% 0;">10/31/2005</div>
<div class="a t" style="top:266.21px;font-size:6.4px;line-height:7.68px;color:#383838;left:431.8px;transform:scaleX(0.840);transform-origin:0 0;"></div>
<div class="a t" style="top:266.21px;font-size:6.4px;line-height:7.68px;color:#3474b6;left:518.8000000000001px;transform:scaleX(0.840);transform-origin:0 0;">Renewal</div>
<div class="a t" style="top:266.21px;font-size:6.4px;line-height:7.68px;color:#383838;right:94.70000000000005px;text-align:right;transform:scaleX(0.840);transform-origin:100% 0;">10/31/2005</div>
<div class="a t" style="top:266.21px;font-size:6.4px;line-height:7.68px;color:#383838;right:36.10000000000002px;text-align:right;transform:scaleX(0.840);transform-origin:100% 0;"></div>
<div class="a" style="left:26px;top:275.65999999999997px;width:661px;height:11.69px;background:#fdfdfd;"></div>
<div class="a" style="left:26px;top:287.09999999999997px;width:661px;height:0.5px;background:#efefef;"></div>
<div class="a" style="left:26px;top:275.65999999999997px;width:12.6px;height:11.69px;background:#efefef;"></div>
<svg class="a" style="left:0;top:0" width="720" height="423"><path d="M30.3 281.56 L31.8 282.96 L34.4 280.26" stroke="#cfcfcf" stroke-width="0.6" fill="none"/></svg>
<div class="a t" style="top:277.90px;font-size:6.4px;line-height:7.68px;color:#383838;left:40.599999999999994px;transform:scaleX(0.840);transform-origin:0 0;">comret02</div>
<div class="a t" style="top:277.90px;font-size:6.4px;line-height:7.68px;color:#3474b6;left:85.4px;transform:scaleX(0.840);transform-origin:0 0;">Foot Loose Shoes</div>
<div class="a t" style="top:277.90px;font-size:6.4px;line-height:7.68px;color:#383838;left:143.7px;transform:scaleX(0.840);transform-origin:0 0;">t0000972</div>
<div class="a t" style="top:277.90px;font-size:6.4px;line-height:7.68px;color:#3474b6;left:188.5px;transform:scaleX(0.840);transform-origin:0 0;">Fairmont Plaza</div>
<div class="a t" style="top:277.90px;font-size:6.4px;line-height:7.68px;color:#3474b6;left:275.9px;transform:scaleX(0.840);transform-origin:0 0;">Foot Loose</div>
<div class="a t" style="top:277.90px;font-size:6.4px;line-height:7.68px;color:#383838;right:292.6px;text-align:right;transform:scaleX(0.840);transform-origin:100% 0;">9/30/2007</div>
<div class="a t" style="top:277.90px;font-size:6.4px;line-height:7.68px;color:#383838;left:431.8px;transform:scaleX(0.840);transform-origin:0 0;"></div>
<div class="a t" style="top:277.90px;font-size:6.4px;line-height:7.68px;color:#3474b6;left:518.8000000000001px;transform:scaleX(0.840);transform-origin:0 0;">Expansion</div>
<div class="a t" style="top:277.90px;font-size:6.4px;line-height:7.68px;color:#383838;right:94.70000000000005px;text-align:right;transform:scaleX(0.840);transform-origin:100% 0;">4/4/2006</div>
<div class="a t" style="top:277.90px;font-size:6.4px;line-height:7.68px;color:#383838;right:36.10000000000002px;text-align:right;transform:scaleX(0.840);transform-origin:100% 0;"></div>
<div class="a" style="left:26px;top:287.35px;width:661px;height:11.69px;background:#f6f6f6;"></div>
<div class="a" style="left:26px;top:298.79px;width:661px;height:0.5px;background:#efefef;"></div>
<div class="a" style="left:26px;top:287.35px;width:12.6px;height:11.69px;background:#f8f8f8;"></div>
<svg class="a" style="left:0;top:0" width="720" height="423"><path d="M30.3 293.25 L31.8 294.65 L34.4 291.95" stroke="#cfcfcf" stroke-width="0.6" fill="none"/></svg>
<div class="a t" style="top:289.59px;font-size:6.4px;line-height:7.68px;color:#383838;left:40.599999999999994px;transform:scaleX(0.840);transform-origin:0 0;">comoff01</div>
<div class="a t" style="top:289.59px;font-size:6.4px;line-height:7.68px;color:#3474b6;left:85.4px;transform:scaleX(0.840);transform-origin:0 0;">Regal Realty</div>
<div class="a t" style="top:289.59px;font-size:6.4px;line-height:7.68px;color:#383838;left:143.7px;transform:scaleX(0.840);transform-origin:0 0;">t0000007</div>
<div class="a t" style="top:289.59px;font-size:6.4px;line-height:7.68px;color:#3474b6;left:188.5px;transform:scaleX(0.840);transform-origin:0 0;">Sunrise Tower</div>
<div class="a t" style="top:289.59px;font-size:6.4px;line-height:7.68px;color:#3474b6;left:275.9px;transform:scaleX(0.840);transform-origin:0 0;">Regal Realty</div>
<div class="a t" style="top:289.59px;font-size:6.4px;line-height:7.68px;color:#383838;right:292.6px;text-align:right;transform:scaleX(0.840);transform-origin:100% 0;">8/31/2006</div>
<div class="a t" style="top:289.59px;font-size:6.4px;line-height:7.68px;color:#383838;left:431.8px;transform:scaleX(0.840);transform-origin:0 0;">36 Month Renewal</div>
<div class="a t" style="top:289.59px;font-size:6.4px;line-height:7.68px;color:#3474b6;left:518.8000000000001px;transform:scaleX(0.840);transform-origin:0 0;">Renewal</div>
<div class="a t" style="top:289.59px;font-size:6.4px;line-height:7.68px;color:#383838;right:94.70000000000005px;text-align:right;transform:scaleX(0.840);transform-origin:100% 0;">5/3/2006</div>
<div class="a t" style="top:289.59px;font-size:6.4px;line-height:7.68px;color:#383838;right:36.10000000000002px;text-align:right;transform:scaleX(0.840);transform-origin:100% 0;"></div>
<div class="a" style="left:26px;top:299.03999999999996px;width:661px;height:11.69px;background:#fdfdfd;"></div>
<div class="a" style="left:26px;top:310.47999999999996px;width:661px;height:0.5px;background:#efefef;"></div>
<div class="a" style="left:26px;top:299.03999999999996px;width:12.6px;height:11.69px;background:#efefef;"></div>
<svg class="a" style="left:0;top:0" width="720" height="423"><path d="M30.3 304.94 L31.8 306.34 L34.4 303.64" stroke="#cfcfcf" stroke-width="0.6" fill="none"/></svg>
<div class="a t" style="top:301.28px;font-size:6.4px;line-height:7.68px;color:#383838;left:40.599999999999994px;transform:scaleX(0.840);transform-origin:0 0;">comoff02</div>
<div class="a t" style="top:301.28px;font-size:6.4px;line-height:7.68px;color:#3474b6;left:85.4px;transform:scaleX(0.840);transform-origin:0 0;">Expert Employment ...</div>
<div class="a t" style="top:301.28px;font-size:6.4px;line-height:7.68px;color:#383838;left:143.7px;transform:scaleX(0.840);transform-origin:0 0;">t0001254</div>
<div class="a t" style="top:301.28px;font-size:6.4px;line-height:7.68px;color:#3474b6;left:188.5px;transform:scaleX(0.840);transform-origin:0 0;">Roosevelt Tower</div>
<div class="a t" style="top:301.28px;font-size:6.4px;line-height:7.68px;color:#3474b6;left:275.9px;transform:scaleX(0.840);transform-origin:0 0;"></div>
<div class="a t" style="top:301.28px;font-size:6.4px;line-height:7.68px;color:#383838;right:292.6px;text-align:right;transform:scaleX(0.840);transform-origin:100% 0;">12/31/2006</div>
<div class="a t" style="top:301.28px;font-size:6.4px;line-height:7.68px;color:#383838;left:431.8px;transform:scaleX(0.840);transform-origin:0 0;"></div>
<div class="a t" style="top:301.28px;font-size:6.4px;line-height:7.68px;color:#3474b6;left:518.8000000000001px;transform:scaleX(0.840);transform-origin:0 0;">Expansion</div>
<div class="a t" style="top:301.28px;font-size:6.4px;line-height:7.68px;color:#383838;right:94.70000000000005px;text-align:right;transform:scaleX(0.840);transform-origin:100% 0;">5/3/2006</div>
<div class="a t" style="top:301.28px;font-size:6.4px;line-height:7.68px;color:#383838;right:36.10000000000002px;text-align:right;transform:scaleX(0.840);transform-origin:100% 0;"></div>
<div class="a" style="left:26px;top:310.73px;width:661px;height:11.69px;background:#f6f6f6;"></div>
<div class="a" style="left:26px;top:322.17px;width:661px;height:0.5px;background:#efefef;"></div>
<div class="a" style="left:26px;top:310.73px;width:12.6px;height:11.69px;background:#f8f8f8;"></div>
<svg class="a" style="left:0;top:0" width="720" height="423"><path d="M30.3 316.63 L31.8 318.03 L34.4 315.33" stroke="#cfcfcf" stroke-width="0.6" fill="none"/></svg>
<div class="a t" style="top:312.97px;font-size:6.4px;line-height:7.68px;color:#383838;left:40.599999999999994px;transform:scaleX(0.840);transform-origin:0 0;">comoff02</div>
<div class="a t" style="top:312.97px;font-size:6.4px;line-height:7.68px;color:#3474b6;left:85.4px;transform:scaleX(0.840);transform-origin:0 0;">Sterk, Cooke &amp; O'Nei...</div>
<div class="a t" style="top:312.97px;font-size:6.4px;line-height:7.68px;color:#383838;left:143.7px;transform:scaleX(0.840);transform-origin:0 0;">t0001250</div>
<div class="a t" style="top:312.97px;font-size:6.4px;line-height:7.68px;color:#3474b6;left:188.5px;transform:scaleX(0.840);transform-origin:0 0;">Roosevelt Tower</div>
<div class="a t" style="top:312.97px;font-size:6.4px;line-height:7.68px;color:#3474b6;left:275.9px;transform:scaleX(0.840);transform-origin:0 0;">Sterk, Cooke &amp; O'Neil</div>
<div class="a t" style="top:312.97px;font-size:6.4px;line-height:7.68px;color:#383838;right:292.6px;text-align:right;transform:scaleX(0.840);transform-origin:100% 0;">9/30/2006</div>
<div class="a t" style="top:312.97px;font-size:6.4px;line-height:7.68px;color:#383838;left:431.8px;transform:scaleX(0.840);transform-origin:0 0;">36 Month Renewal</div>
<div class="a t" style="top:312.97px;font-size:6.4px;line-height:7.68px;color:#3474b6;left:518.8000000000001px;transform:scaleX(0.840);transform-origin:0 0;">Renewal</div>
<div class="a t" style="top:312.97px;font-size:6.4px;line-height:7.68px;color:#383838;right:94.70000000000005px;text-align:right;transform:scaleX(0.840);transform-origin:100% 0;">6/2/2006</div>
<div class="a t" style="top:312.97px;font-size:6.4px;line-height:7.68px;color:#383838;right:36.10000000000002px;text-align:right;transform:scaleX(0.840);transform-origin:100% 0;"></div>
<div class="a" style="left:26px;top:322.41999999999996px;width:661px;height:11.69px;background:#fdfdfd;"></div>
<div class="a" style="left:26px;top:333.85999999999996px;width:661px;height:0.5px;background:#efefef;"></div>
<div class="a" style="left:26px;top:322.41999999999996px;width:12.6px;height:11.69px;background:#efefef;"></div>
<svg class="a" style="left:0;top:0" width="720" height="423"><path d="M30.3 328.32 L31.8 329.72 L34.4 327.02" stroke="#cfcfcf" stroke-width="0.6" fill="none"/></svg>
<div class="a t" style="top:324.66px;font-size:6.4px;line-height:7.68px;color:#383838;left:40.599999999999994px;transform:scaleX(0.840);transform-origin:0 0;">comoff01</div>
<div class="a t" style="top:324.66px;font-size:6.4px;line-height:7.68px;color:#3474b6;left:85.4px;transform:scaleX(0.840);transform-origin:0 0;">Roxio, Inc.</div>
<div class="a t" style="top:324.66px;font-size:6.4px;line-height:7.68px;color:#383838;left:143.7px;transform:scaleX(0.840);transform-origin:0 0;">t0000001</div>
<div class="a t" style="top:324.66px;font-size:6.4px;line-height:7.68px;color:#3474b6;left:188.5px;transform:scaleX(0.840);transform-origin:0 0;">Sunrise Tower</div>
<div class="a t" style="top:324.66px;font-size:6.4px;line-height:7.68px;color:#3474b6;left:275.9px;transform:scaleX(0.840);transform-origin:0 0;">Roxio, Inc.</div>
<div class="a t" style="top:324.66px;font-size:6.4px;line-height:7.68px;color:#383838;right:292.6px;text-align:right;transform:scaleX(0.840);transform-origin:100% 0;">1/31/2007</div>
<div class="a t" style="top:324.66px;font-size:6.4px;line-height:7.68px;color:#383838;left:431.8px;transform:scaleX(0.840);transform-origin:0 0;">60 Month Renewal</div>
<div class="a t" style="top:324.66px;font-size:6.4px;line-height:7.68px;color:#3474b6;left:518.8000000000001px;transform:scaleX(0.840);transform-origin:0 0;">Renewal</div>
<div class="a t" style="top:324.66px;font-size:6.4px;line-height:7.68px;color:#383838;right:94.70000000000005px;text-align:right;transform:scaleX(0.840);transform-origin:100% 0;">7/2/2006</div>
<div class="a t" style="top:324.66px;font-size:6.4px;line-height:7.68px;color:#383838;right:36.10000000000002px;text-align:right;transform:scaleX(0.840);transform-origin:100% 0;"></div>
<div class="a" style="left:26px;top:334.11px;width:661px;height:11.69px;background:#f6f6f6;"></div>
<div class="a" style="left:26px;top:345.55px;width:661px;height:0.5px;background:#efefef;"></div>
<div class="a" style="left:26px;top:334.11px;width:12.6px;height:11.69px;background:#f8f8f8;"></div>
<svg class="a" style="left:0;top:0" width="720" height="423"><path d="M30.3 340.01 L31.8 341.41 L34.4 338.71" stroke="#cfcfcf" stroke-width="0.6" fill="none"/></svg>
<div class="a t" style="top:336.35px;font-size:6.4px;line-height:7.68px;color:#383838;left:40.599999999999994px;transform:scaleX(0.840);transform-origin:0 0;">comoff02</div>
<div class="a t" style="top:336.35px;font-size:6.4px;line-height:7.68px;color:#3474b6;left:85.4px;transform:scaleX(0.840);transform-origin:0 0;">DC Travel</div>
<div class="a t" style="top:336.35px;font-size:6.4px;line-height:7.68px;color:#383838;left:143.7px;transform:scaleX(0.840);transform-origin:0 0;">t0001255</div>
<div class="a t" style="top:336.35px;font-size:6.4px;line-height:7.68px;color:#3474b6;left:188.5px;transform:scaleX(0.840);transform-origin:0 0;">Roosevelt Tower</div>
<div class="a t" style="top:336.35px;font-size:6.4px;line-height:7.68px;color:#3474b6;left:275.9px;transform:scaleX(0.840);transform-origin:0 0;"></div>
<div class="a t" style="top:336.35px;font-size:6.4px;line-height:7.68px;color:#383838;right:292.6px;text-align:right;transform:scaleX(0.840);transform-origin:100% 0;">2/28/2007</div>
<div class="a t" style="top:336.35px;font-size:6.4px;line-height:7.68px;color:#383838;left:431.8px;transform:scaleX(0.840);transform-origin:0 0;">48 Month Renewal</div>
<div class="a t" style="top:336.35px;font-size:6.4px;line-height:7.68px;color:#3474b6;left:518.8000000000001px;transform:scaleX(0.840);transform-origin:0 0;">Renewal</div>
<div class="a t" style="top:336.35px;font-size:6.4px;line-height:7.68px;color:#383838;right:94.70000000000005px;text-align:right;transform:scaleX(0.840);transform-origin:100% 0;">9/1/2006</div>
<div class="a t" style="top:336.35px;font-size:6.4px;line-height:7.68px;color:#383838;right:36.10000000000002px;text-align:right;transform:scaleX(0.840);transform-origin:100% 0;"></div>
<div class="a" style="left:38.0px;top:89.3px;width:0.6px;height:22.700000000000003px;background:#efefef;"></div>
<div class="a" style="left:38.0px;top:112.0px;width:0.6px;height:233.60000000000002px;background:#e6e6e6;"></div>
<div class="a" style="left:83.2px;top:89.3px;width:0.6px;height:22.700000000000003px;background:#efefef;"></div>
<div class="a" style="left:83.2px;top:112.0px;width:0.6px;height:233.60000000000002px;background:#e6e6e6;"></div>
<div class="a" style="left:141.2px;top:89.3px;width:0.6px;height:22.700000000000003px;background:#efefef;"></div>
<div class="a" style="left:141.2px;top:112.0px;width:0.6px;height:233.60000000000002px;background:#e6e6e6;"></div>
<div class="a" style="left:185.89999999999998px;top:89.3px;width:0.6px;height:22.700000000000003px;background:#efefef;"></div>
<div class="a" style="left:185.89999999999998px;top:112.0px;width:0.6px;height:233.60000000000002px;background:#e6e6e6;"></div>
<div class="a" style="left:273.2px;top:89.3px;width:0.6px;height:22.700000000000003px;background:#efefef;"></div>
<div class="a" style="left:273.2px;top:112.0px;width:0.6px;height:233.60000000000002px;background:#e6e6e6;"></div>
<div class="a" style="left:361.2px;top:89.3px;width:0.6px;height:22.700000000000003px;background:#efefef;"></div>
<div class="a" style="left:361.2px;top:112.0px;width:0.6px;height:233.60000000000002px;background:#e6e6e6;"></div>
<div class="a" style="left:429.2px;top:89.3px;width:0.6px;height:22.700000000000003px;background:#efefef;"></div>
<div class="a" style="left:429.2px;top:112.0px;width:0.6px;height:233.60000000000002px;background:#e6e6e6;"></div>
<div class="a" style="left:515.9000000000001px;top:89.3px;width:0.6px;height:22.700000000000003px;background:#efefef;"></div>
<div class="a" style="left:515.9000000000001px;top:112.0px;width:0.6px;height:233.60000000000002px;background:#e6e6e6;"></div>
<div class="a" style="left:559.0px;top:89.3px;width:0.6px;height:22.700000000000003px;background:#bdbdbd;"></div>
<div class="a" style="left:559.0px;top:112.0px;width:0.6px;height:233.60000000000002px;background:#bdbdbd;"></div>
<div class="a" style="left:627.1px;top:89.3px;width:0.6px;height:22.700000000000003px;background:#efefef;"></div>
<div class="a" style="left:627.1px;top:112.0px;width:0.6px;height:233.60000000000002px;background:#e6e6e6;"></div>
<div class="a" style="left:685.3000000000001px;top:89.3px;width:0.6px;height:22.700000000000003px;background:#efefef;"></div>
<div class="a" style="left:685.3000000000001px;top:112.0px;width:0.6px;height:233.60000000000002px;background:#e6e6e6;"></div>
<div class="a t" style="top:91.92px;font-size:6.0px;line-height:7.20px;color:#5a5550;left:41px;transform:scaleX(0.848);transform-origin:0 0;">Property Code</div>
<div class="a t" style="top:91.92px;font-size:6.0px;line-height:7.20px;color:#5a5550;left:92.1px;transform:scaleX(0.883);transform-origin:0 0;">Tenant Name</div>
<div class="a t" style="top:91.92px;font-size:6.0px;line-height:7.20px;color:#5a5550;left:144.7px;transform:scaleX(0.861);transform-origin:0 0;">Tenant Code</div>
<div class="a t" style="top:91.92px;font-size:6.0px;line-height:7.20px;color:#5a5550;left:207.4px;transform:scaleX(0.890);transform-origin:0 0;">Property Name</div>
<div class="a t" style="top:91.92px;font-size:6.0px;line-height:7.20px;color:#5a5550;left:301.7px;transform:scaleX(0.865);transform-origin:0 0;">Customer</div>
<div class="a t" style="top:91.92px;font-size:6.0px;line-height:7.20px;color:#5a5550;left:363.9px;transform:scaleX(0.888);transform-origin:0 0;">Amendment Expiration</div>
<div class="a t" style="top:91.92px;font-size:6.0px;line-height:7.20px;color:#5a5550;left:446.4px;transform:scaleX(0.896);transform-origin:0 0;">Option Description</div>
<div class="a t" style="top:91.92px;font-size:6.0px;line-height:7.20px;color:#5a5550;left:519.4px;transform:scaleX(0.890);transform-origin:0 0;">Option Type</div>
<div class="a t" style="top:91.92px;font-size:6.0px;line-height:7.20px;color:#5a5550;left:565px;transform:scaleX(0.883);transform-origin:0 0;">Option Latest Notice</div>
<div class="a t" style="top:91.92px;font-size:6.0px;line-height:7.20px;color:#5a5550;left:635.9px;transform:scaleX(0.878);transform-origin:0 0;">Effective Date</div>
<svg class="a" style="left:0;top:0" width="720" height="423"><path d="M134.7 94.3 L136 95.6 L137.3 94.3" stroke="#8a8a8a" stroke-width="0.6" fill="none"/><path d="M178.89999999999998 94.3 L180.2 95.6 L181.5 94.3" stroke="#8a8a8a" stroke-width="0.6" fill="none"/><path d="M267.0 94.3 L268.3 95.6 L269.6 94.3" stroke="#8a8a8a" stroke-width="0.6" fill="none"/><path d="M354.3 94.3 L355.6 95.6 L356.90000000000003 94.3" stroke="#8a8a8a" stroke-width="0.6" fill="none"/><path d="M422.3 94.3 L423.6 95.6 L424.90000000000003 94.3" stroke="#8a8a8a" stroke-width="0.6" fill="none"/><path d="M509.8 94.3 L511.1 95.6 L512.4 94.3" stroke="#8a8a8a" stroke-width="0.6" fill="none"/><path d="M552.6 94.3 L553.9 95.6 L555.1999999999999 94.3" stroke="#8a8a8a" stroke-width="0.6" fill="none"/><path d="M620.4000000000001 94.3 L621.7 95.6 L623.0 94.3" stroke="#8a8a8a" stroke-width="0.6" fill="none"/><path d="M678.5 94.3 L679.8 95.6 L681.0999999999999 94.3" stroke="#8a8a8a" stroke-width="0.6" fill="none"/><path d="M76.3 93.7 L78.9 96.3 M78.9 93.7 L76.3 96.3" stroke="#9a9a9a" stroke-width="0.6"/><path d="M30.0 94.0 L31.6 95.3 L34.2 92.6" stroke="#d0d0d0" stroke-width="0.6" fill="none"/></svg>
<div class="a" style="left:42.599999999999994px;top:102.3px;width:36.60000000000001px;height:7.7px;background:#fff;border:0.5px solid #dddddd;box-sizing:border-box;border-radius:1.2px;"></div>
<div class="a" style="left:87.8px;top:102.3px;width:49.39999999999999px;height:7.7px;background:#fff;border:0.5px solid #dddddd;box-sizing:border-box;border-radius:1.2px;"></div>
<div class="a" style="left:145.8px;top:102.3px;width:36.099999999999966px;height:7.7px;background:#fff;border:0.5px solid #dddddd;box-sizing:border-box;border-radius:1.2px;"></div>
<div class="a" style="left:190.5px;top:102.3px;width:78.69999999999999px;height:7.7px;background:#fff;border:0.5px solid #dddddd;box-sizing:border-box;border-radius:1.2px;"></div>
<div class="a" style="left:277.8px;top:102.3px;width:79.39999999999998px;height:7.7px;background:#fff;border:0.5px solid #dddddd;box-sizing:border-box;border-radius:1.2px;"></div>
<div class="a" style="left:365.8px;top:102.3px;width:59.39999999999998px;height:7.7px;background:#fff;border:0.5px solid #dddddd;box-sizing:border-box;border-radius:1.2px;"></div>
<div class="a" style="left:433.8px;top:102.3px;width:78.10000000000002px;height:7.7px;background:#fff;border:0.5px solid #dddddd;box-sizing:border-box;border-radius:1.2px;"></div>
<div class="a" style="left:520.5px;top:102.3px;width:34.5px;height:7.7px;background:#fff;border:0.5px solid #dddddd;box-sizing:border-box;border-radius:1.2px;"></div>
<div class="a" style="left:563.5999999999999px;top:102.3px;width:59.500000000000114px;height:7.7px;background:#fff;border:0.5px solid #dddddd;box-sizing:border-box;border-radius:1.2px;"></div>
<div class="a" style="left:631.6999999999999px;top:102.3px;width:49.600000000000136px;height:7.7px;background:#fff;border:0.5px solid #dddddd;box-sizing:border-box;border-radius:1.2px;"></div>
<div class="a" style="left:682px;top:89.8px;width:11.8px;height:11.8px;background:#3a3a3a;border-radius:0.8px;"></div>
<div class="a" style="left:685.1px;top:92.8px;width:4.7px;height:0.8px;background:#d5dde5;"></div>
<div class="a" style="left:685.1px;top:94.6px;width:4.7px;height:0.8px;background:#9aa5b0;"></div>
<div class="a" style="left:685.1px;top:96.4px;width:4.7px;height:0.8px;background:#d5dde5;"></div>
<div class="a" style="left:686px;top:111.6px;width:12.8px;height:234.0px;background:#fafafa;"></div>
<div class="a" style="left:690.4px;top:170px;width:0.5px;height:175.6px;background:#eeeeee;"></div>
<div class="a" style="left:689.1px;top:170.7px;width:3.9px;height:58.9px;background:#8c8c8c;border-radius:1.9px;"></div>
<div class="a" style="left:690.1px;top:112.3px;width:8.8px;height:58.4px;background:#3b3b3b;border-radius:1.5px 0 0 1.5px;"></div>
<svg class="a" style="left:0;top:0" width="720" height="423"><path d="M695.3 118.3 L693.9 119.7 L695.3 121.1" stroke="#fff" stroke-width="0.7" fill="none"/></svg>
<div class="a t" style="left:664.9px;top:141.75px;width:60px;height:7px;line-height:7px;font-size:5.4px;color:#f4f4f4;text-align:center;transform:rotate(-90deg) scaleX(1.010);transform-origin:30px 3.5px;">Related Training</div>
<svg class="a" style="left:0;top:0" width="720" height="423"><path d="M689.8 342.2 L692.6 342.2 L691.2 344 Z" fill="#777"/></svg>
<div class="a" style="left:26px;top:345.6px;width:661px;height:5.7px;background:#f9f9f9;"></div>
<div class="a" style="left:566.4px;top:347px;width:22.2px;height:3.4px;background:#8c8c8c;border-radius:1.7px;"></div>
<svg class="a" style="left:0;top:0" width="720" height="423"><path d="M563.6 347.3 L561.9 348.7 L563.6 350.1 Z M684.6 347.3 L686.3 348.7 L684.6 350.1 Z" fill="#666"/></svg>
<div class="a" style="left:26px;top:351.3px;width:668px;height:12.3px;background:#f0f0f0;"></div>
<div class="a" style="left:26px;top:351.3px;width:668px;height:0.6px;background:#e6e6e6;"></div>
<div class="a" style="left:26px;top:363.0px;width:668px;height:0.6px;background:#e8e8e8;"></div>
<div class="a" style="left:38.0px;top:351.3px;width:0.6px;height:12.3px;background:#e2e2e2;"></div>
<div class="a" style="left:83.2px;top:351.3px;width:0.6px;height:12.3px;background:#e2e2e2;"></div>
<div class="a" style="left:141.2px;top:351.3px;width:0.6px;height:12.3px;background:#e2e2e2;"></div>
<div class="a" style="left:185.89999999999998px;top:351.3px;width:0.6px;height:12.3px;background:#e2e2e2;"></div>
<div class="a" style="left:273.2px;top:351.3px;width:0.6px;height:12.3px;background:#e2e2e2;"></div>
<div class="a" style="left:361.2px;top:351.3px;width:0.6px;height:12.3px;background:#e2e2e2;"></div>
<div class="a" style="left:429.2px;top:351.3px;width:0.6px;height:12.3px;background:#e2e2e2;"></div>
<div class="a" style="left:515.9000000000001px;top:351.3px;width:0.6px;height:12.3px;background:#e2e2e2;"></div>
<div class="a" style="left:559.0px;top:351.3px;width:0.6px;height:12.3px;background:#e2e2e2;"></div>
<div class="a" style="left:627.1px;top:351.3px;width:0.6px;height:12.3px;background:#e2e2e2;"></div>
<div class="a" style="left:685.3000000000001px;top:351.3px;width:0.6px;height:12.3px;background:#e2e2e2;"></div>
<div class="a" style="left:31.25px;top:366.3px;width:13.25px;height:10.5px;background:#efefef;border:0.5px solid #e4e4e4;box-sizing:border-box;border-radius:1px;"></div>
<div class="a" style="left:47px;top:366.3px;width:12.5px;height:10.5px;background:#efefef;border:0.5px solid #e4e4e4;box-sizing:border-box;border-radius:1px;"></div>
<div class="a" style="left:90px;top:366.3px;width:12.5px;height:10.5px;background:#efefef;border:0.5px solid #e4e4e4;box-sizing:border-box;border-radius:1px;"></div>
<div class="a" style="left:104.5px;top:366.3px;width:12.5px;height:10.5px;background:#efefef;border:0.5px solid #e4e4e4;box-sizing:border-box;border-radius:1px;"></div>
<div class="a" style="left:61.25px;top:366.3px;width:19.25px;height:10.5px;background:#fff;border:0.5px solid #ececec;box-sizing:border-box;border-radius:1px;"></div>
<div class="a t" style="top:368.30px;font-size:5.6px;line-height:6.72px;color:#666;left:66.6px;">1</div>
<div class="a t" style="top:368.31px;font-size:5.8px;line-height:6.96px;color:#666;left:82px;transform:scaleX(0.930);transform-origin:0 0;">/ 5</div>
<div class="a" style="left:126.4px;top:366.25px;width:26.1px;height:8.9px;background:#fff;border:0.5px solid #e6e6e6;box-sizing:border-box;border-radius:1px;"></div>
<svg class="a" style="left:0;top:0" width="720" height="423"><path d="M36.3 369.3 V373.7" stroke="#777" stroke-width="0.8"/><path d="M40.2 369.3 L37 371.5 L40.2 373.7 Z" fill="#777"/><path d="M54.5 369.6 L51.8 371.5 L54.5 373.4 Z" fill="#555"/><path d="M95.1 369.4 L98.2 371.5 L95.1 373.6 Z" fill="#333"/><path d="M108.7 369.3 L111.9 371.5 L108.7 373.7 Z" fill="#333"/><path d="M112.6 369.3 V373.7" stroke="#333" stroke-width="0.8"/><path d="M147.1 369.8 L148.3 371 L149.5 369.8" stroke="#333" stroke-width="0.7" fill="none"/></svg>
<div class="a t" style="top:368.49px;font-size:5.4px;line-height:6.48px;color:#555;left:132px;transform:scaleX(0.966);transform-origin:0 0;">40</div>
<div class="a t" style="top:367.32px;font-size:6.0px;line-height:7.20px;color:#444;left:153.9px;transform:scaleX(0.882);transform-origin:0 0;">items per page</div>
<div class="a t" style="top:368.71px;font-size:5.8px;line-height:6.96px;color:#444;right:29.799999999999955px;text-align:right;transform:scaleX(0.941);transform-origin:100% 0;">1 - 40 of 163 items</div>
<div class="a t" style="top:389.69px;font-size:5.4px;line-height:6.48px;color:#4a4a4a;right:26.299999999999955px;text-align:right;transform:scaleX(0.988);transform-origin:100% 0;">© 2025 Copyright Yardi Systems, Inc. All Rights Reserved.</div>
<div class="a" style="left:372.9px;top:111.3px;width:56.400000000000034px;height:83.39999999999999px;background:#fff;border:0.5px solid #dadada;box-sizing:border-box;box-shadow:0 0.5px 2px rgba(0,0,0,0.12);"></div>
<div class="a" style="left:373.4px;top:111.8px;width:55.400000000000034px;height:13.600000000000009px;background:#b8c7ce;"></div>
<div class="a t" style="top:114.93px;font-size:6.2px;line-height:7.44px;color:#2a2a2a;left:386.7px;transform:scaleX(0.870);transform-origin:0 0;-webkit-text-stroke:0.12px #2a2a2a;">Sort Ascending</div>
<div class="a" style="left:373.4px;top:125.4px;width:55.400000000000034px;height:0.5px;background:#e6e6e6;"></div>
<div class="a t" style="top:128.48px;font-size:6.2px;line-height:7.44px;color:#2a2a2a;left:386.7px;transform:scaleX(0.857);transform-origin:0 0;-webkit-text-stroke:0.12px #2a2a2a;">Sort Descending</div>
<div class="a" style="left:373.4px;top:138.9px;width:55.400000000000034px;height:14.199999999999989px;background:#b8c7ce;"></div>
<div class="a" style="left:373.4px;top:138.9px;width:55.400000000000034px;height:0.5px;background:#e6e6e6;"></div>
<div class="a t" style="top:142.33px;font-size:6.2px;line-height:7.44px;color:#2a2a2a;left:386.7px;transform:scaleX(0.848);transform-origin:0 0;-webkit-text-stroke:0.12px #2a2a2a;">Hide Column</div>
<div class="a" style="left:373.4px;top:153.1px;width:55.400000000000034px;height:0.5px;background:#e6e6e6;"></div>
<div class="a t" style="top:156.43px;font-size:6.2px;line-height:7.44px;color:#2a2a2a;left:386.7px;transform:scaleX(0.824);transform-origin:0 0;-webkit-text-stroke:0.12px #2a2a2a;">Group</div>
<div class="a" style="left:373.4px;top:167.1px;width:55.400000000000034px;height:0.5px;background:#e6e6e6;"></div>
<div class="a t" style="top:170.48px;font-size:6.2px;line-height:7.44px;color:#2a2a2a;left:386.7px;transform:scaleX(0.859);transform-origin:0 0;-webkit-text-stroke:0.12px #2a2a2a;">Pin Right</div>
<div class="a" style="left:373.4px;top:181.2px;width:55.400000000000034px;height:0.5px;background:#e6e6e6;"></div>
<div class="a t" style="top:184.03px;font-size:6.2px;line-height:7.44px;color:#2a2a2a;left:386.7px;transform:scaleX(0.827);transform-origin:0 0;-webkit-text-stroke:0.12px #2a2a2a;">Unpin</div>
<svg class="a" style="left:0;top:0" width="720" height="423"><path d="M378.4 116.0 V121.19999999999999 M377.3 120.1 L378.4 121.19999999999999 L379.5 120.1" stroke="#222" stroke-width="0.9" fill="none"/><rect x="380.3" y="116.0" width="1.5" height="1.3" fill="#333"/><rect x="380.3" y="118.0" width="2.1" height="1.3" fill="#333"/><rect x="380.3" y="120.0" width="2.7" height="1.3" fill="#333"/><path d="M378.4 129.55 V134.75 M377.3 133.65 L378.4 134.75 L379.5 133.65" stroke="#222" stroke-width="0.9" fill="none"/><rect x="380.3" y="129.55" width="2.7" height="1.3" fill="#333"/><rect x="380.3" y="131.55" width="2.1" height="1.3" fill="#333"/><rect x="380.3" y="133.55" width="1.5" height="1.3" fill="#333"/><path d="M378.7 144.9 L381.5 147.1 M381.5 144.9 L378.7 147.1" stroke="#222" stroke-width="1.0"/><path d="M378.7 186.6 L381.5 188.79999999999998 M381.5 186.6 L378.7 188.79999999999998" stroke="#222" stroke-width="1.0"/><rect x="377.6" y="158.4" width="5" height="3.4" fill="none" stroke="#333" stroke-width="0.7"/><rect x="377.6" y="158.4" width="2.1" height="3.4" fill="#333"/><path d="M379.2 172.34999999999997 L381 174.14999999999998 L379.2 175.95" stroke="#222" stroke-width="1.1" fill="none"/></svg>
<svg class="a" style="left:0;top:0" width="720" height="423"><path d="M400.6 145.2 C400.6 144.4 401.8 144.4 401.8 145.2 V148 C401.8 147.4 402.9 147.4 402.9 148 C402.9 147.5 404 147.5 404 148.2 C404 147.7 405 147.7 405 148.4 V150.8 C405 152 404.3 152.8 403.4 152.8 H401.8 C401 152.8 400.3 152.2 399.8 151.4 L398.6 149.4 C398.3 148.8 399 148.4 399.5 148.9 L400.6 150 Z" fill="#fff" stroke="#222" stroke-width="0.5"/></svg>
</body></html>
